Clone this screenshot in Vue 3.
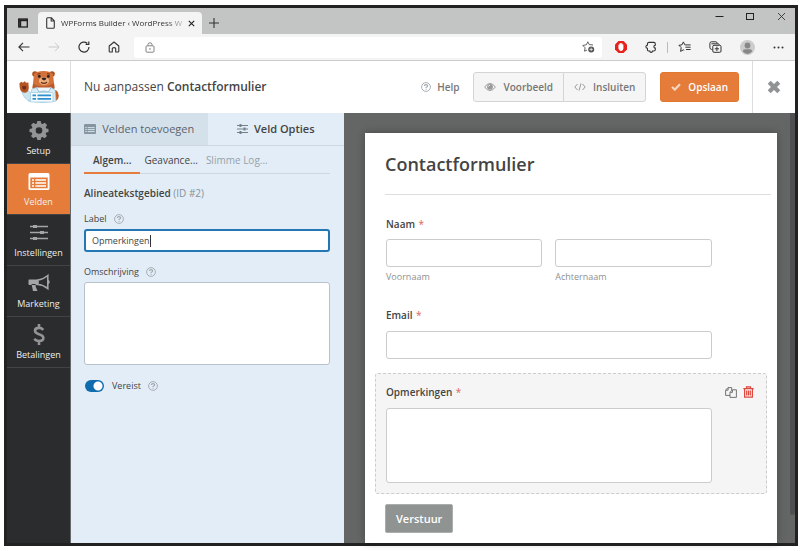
<template>
  <div class="screen">
    <div class="window">
      <header class="titlebar">
        <button class="icon-btn tab-actions" aria-label="Tabbladacties">
          <svg width="10" height="10" viewBox="0 0 10 10">
            <rect x="0.7" y="1" width="8.6" height="8" fill="none" stroke="#222" stroke-width="1.3" />
            <path d="M0.7 2.2H9.3M2.2 2V9" stroke="#222" stroke-width="2" />
          </svg>
        </button>
        <div class="tab">
          <svg width="9" height="12" viewBox="0 0 9 12" fill="none" stroke="#333" stroke-width="1.1" stroke-linejoin="round">
            <path d="M1.5 0.7H5.3L8.3 3.8V10.3Q8.3 11.3 7.3 11.3H1.7Q0.7 11.3 0.7 10.3V1.7Q0.7 0.7 1.5 0.7ZM5.2 0.8V4H8.2" />
          </svg>
          <span class="tab-title">WPForms Builder ‹ WordPress W</span>
          <button class="icon-btn" aria-label="Tabblad sluiten">
            <svg width="7" height="7" viewBox="0 0 7 7" stroke="#222" stroke-width="1.1"><path d="M0.8 0.8L6.2 6.2M6.2 0.8L0.8 6.2" /></svg>
          </button>
        </div>
        <button class="icon-btn new-tab" aria-label="Nieuw tabblad">
          <svg width="10" height="10" viewBox="0 0 10 10" stroke="#333" stroke-width="1.1"><path d="M5 0V10M0 5H10" /></svg>
        </button>
        <div class="window-controls">
          <button class="icon-btn" aria-label="Minimaliseren">
            <svg width="9" height="9" viewBox="0 0 9 9" stroke="#222"><path d="M0.5 4.5H8.5" /></svg>
          </button>
          <button class="icon-btn" aria-label="Maximaliseren">
            <svg width="9" height="9" viewBox="0 0 9 9" fill="none" stroke="#222"><rect x="0.5" y="1.5" width="7" height="6" /></svg>
          </button>
          <button class="icon-btn" aria-label="Sluiten">
            <svg width="9" height="9" viewBox="0 0 9 9" stroke="#333" stroke-width="0.9"><path d="M1 1L8 8M8 1L1 8" /></svg>
          </button>
        </div>
      </header>

      <nav class="toolbar" aria-label="Browser">
        <div class="nav-buttons">
          <button class="icon-btn" aria-label="Vorige">
            <svg width="12" height="10" viewBox="0 0 12 10" fill="none" stroke="#333" stroke-width="1.1"><path d="M11.5 5H1M5 0.8L0.9 5L5 9.2" /></svg>
          </button>
          <button class="icon-btn" aria-label="Volgende" disabled>
            <svg width="12" height="10" viewBox="0 0 12 10" fill="none" stroke="#c9c9c9" stroke-width="1"><path d="M0.5 5H11M7 0.8L11.1 5L7 9.2" /></svg>
          </button>
          <button class="icon-btn" aria-label="Vernieuwen">
            <svg width="12" height="12" viewBox="0 0 12 12" fill="none" stroke="#333" stroke-width="1.2"><path d="M11 6A5 5 0 1 1 9.2 2.2M10.8 0.6V3.4H7.6" /></svg>
          </button>
          <button class="icon-btn" aria-label="Startpagina">
            <svg width="12" height="12" viewBox="0 0 12 12" fill="none" stroke="#333" stroke-width="1.1" stroke-linejoin="round"><path d="M1.2 5L6 1L10.8 5V10.2Q10.8 11 10 11H7.7V7.6Q7.7 6.6 6 6.6Q4.3 6.6 4.3 7.6V11H2Q1.2 11 1.2 10.2Z" /></svg>
          </button>
        </div>
        <div class="address">
          <svg width="10" height="11" viewBox="0 0 10 11" fill="none" stroke="#777" stroke-width="0.9">
            <rect x="1" y="3.8" width="8" height="6.4" rx="1" /><path d="M3 3.6V2.4Q3 0.8 5 0.8Q7 0.8 7 2.4V3.6" /><circle cx="5" cy="7" r="0.7" fill="#555" stroke="none" />
          </svg>
          <input type="text" aria-label="Adresbalk" />
          <button class="icon-btn" aria-label="Toevoegen aan favorieten">
            <svg width="13" height="12" viewBox="0 0 13 12" fill="none" stroke="#555" stroke-width="0.9" stroke-linejoin="round">
              <path d="M10 4.4L10.6 3.9L7.2 3.6L5.8 0.8L4.3 3.8L0.8 4.4L3.1 6.8L2.5 10.2L5 9" /><circle cx="9.2" cy="8.4" r="3" fill="#555" stroke="none" /><path d="M9.2 6.7V10.1M7.5 8.4H10.9" stroke="#eee" stroke-width="0.8" />
            </svg>
          </button>
        </div>
        <div class="browser-actions">
          <button class="icon-btn" aria-label="Adblocker">
            <svg width="12" height="12" viewBox="0 0 12 12"><path d="M3.5 0H8.5L12 3.5V8.5L8.5 12H3.5L0 8.5V3.5Z" fill="#e8211d" /><path d="M3.4 5.6V3.7H4.4V2.6H5.4V2H6.4V2.6H7.4V3.4H8.4V7.8Q7.8 10 6 10Q4.6 10 3.4 7.4Z" fill="#fff" /></svg>
          </button>
          <button class="icon-btn" aria-label="Extensies">
            <svg width="12" height="12" viewBox="0 0 12 12" fill="none" stroke="#333" stroke-width="1.1"><path d="M4 1.4H8.8Q10.3 1.4 10.3 3V4.2C8.4 4 8.4 7.2 10.3 7V8.6Q10.3 10 8.8 10H7.5C7.4 11.8 4.8 11.8 4.8 10H3.6Q2.4 9.8 2.4 8.5V7.3C0.4 7 0.4 4.4 2.4 4.2V3Q2.4 1.4 4 1.4Z" /></svg>
          </button>
          <span class="divider"></span>
          <button class="icon-btn" aria-label="Favorieten">
            <svg width="13" height="12" viewBox="0 0 13 12" fill="none" stroke="#333" stroke-width="1" stroke-linejoin="round"><path d="M7.5 4L6.8 3.8L5.4 0.9L4 3.8L0.9 4.3L3.2 6.6L2.6 10.4L5.4 8.8L6.2 9.3M7.4 3.9H12.6M7.4 6.2H12.6M8 8.5H12.6" /></svg>
          </button>
          <button class="icon-btn" aria-label="Verzamelingen">
            <svg width="13" height="12" viewBox="0 0 13 12" fill="none" stroke="#333" stroke-width="1"><path d="M3.3 8.4H2.4Q0.9 8 0.9 6.6V2.4Q0.9 0.8 2.4 0.8H6.8Q8.1 0.8 8.3 2.4M2.4 2.8H9.2Q10.2 2.8 10.3 3.8" /><rect x="3.8" y="4.3" width="8.2" height="7" rx="1.2" /><path d="M7.9 5.7V10M5.8 7.8H10" /></svg>
          </button>
          <button class="icon-btn" aria-label="Profiel">
            <svg width="15" height="15" viewBox="0 0 15 15"><circle cx="7.5" cy="7.5" r="7.5" fill="#ccc" /><circle cx="7.5" cy="5.5" r="2.9" fill="#888" /><path d="M2.8 11.6Q3 9.3 5 9.3H10Q12 9.3 12.2 11.6Q7.5 16.5 2.8 11.6Z" fill="#888" /></svg>
          </button>
          <button class="icon-btn" aria-label="Meer">
            <svg width="11" height="3" viewBox="0 0 11 3" fill="#333"><circle cx="1.5" cy="1.5" r="1" /><circle cx="5.5" cy="1.5" r="1" /><circle cx="9.5" cy="1.5" r="1" /></svg>
          </button>
        </div>
      </nav>

      <div class="builder-header">
        <div class="logo">
          <svg width="40" height="34" viewBox="0 0 40 34">
            <circle cx="16" cy="4" r="2.8" fill="#a9501f" /><circle cx="33" cy="4" r="2.8" fill="#a9501f" />
            <path d="M33 21Q36 19 38 21Q41 25 39 29Q37 32 33 31Z" fill="#c4602a" />
            <path d="M15 4Q18 1 24.5 1Q31 1 34 4L35.5 18Q33 21 25 21Q16 21 13.5 18Z" fill="#d2713a" />
            <path d="M14 14Q18 16 24 16.5Q31 16 35 13L35.5 18.5L30 20H18L13.5 18.5Z" fill="#ba5a2a" />
            <ellipse cx="25" cy="11" rx="5.2" ry="4" fill="#eeb07c" />
            <path d="M22.5 8Q25 6.8 27.5 8Q27 10.4 25 10.4Q23 10.4 22.5 8Z" fill="#33241f" />
            <path d="M22 12.2Q25 14.6 28 12" stroke="#662b18" stroke-width="1.3" fill="none" />
            <path d="M18.4 4.2L21.4 3.6M28 3.6L31 4.2" stroke="#6e3018" stroke-width="1" />
            <circle cx="20.3" cy="6.4" r="1.4" fill="#2d211d" /><circle cx="29.3" cy="6.4" r="1.4" fill="#2d211d" />
            <path d="M13 19L17.5 17.6L24.5 21L32 17.6L36 20L37 31Q24 34 9 31Z" fill="#d7ecf6" stroke="#9cc7dc" stroke-width="0.7" />
            <path d="M17.5 17.6L20 22L24.5 21L29.5 22L32 17.6" fill="#eef8fc" stroke="#7fb3ce" stroke-width="0.8" />
            <path d="M3 22L9 20.5L14 25L13 31.5Q5 30 3 22Z" fill="#cce5f1" stroke="#9cc7dc" stroke-width="0.7" />
            <path d="M0.4 13.5L2.2 11.8L4 12.8L5.6 11.2L7.2 12.8L9.4 12.4L9.8 18Q9.4 22.5 5.6 22.8Q1.6 22.4 0.8 18Z" fill="#b65524" />
            <path d="M3 16.6Q5.2 14.8 7.4 16.8Q7.2 20 5 19.8Q3.2 19 3 16.6Z" fill="#6e3018" />
            <rect x="11.5" y="22.5" width="22.5" height="9.5" rx="1" fill="#f5fbfe" stroke="#9ecae0" stroke-width="0.7" />
            <path d="M13.5 25.4H17M18.5 25.4H32M13.5 28.9H17M18.5 28.9H32" stroke="#2e8fd0" stroke-width="1.8" />
          </svg>
        </div>
        <h1 class="form-name">Nu aanpassen <strong>Contactformulier</strong></h1>
        <div class="header-actions">
          <a href="#" class="help"><HelpIcon class="help-icon" />Help</a>
          <div class="button-group">
            <button type="button">
              <svg width="12" height="8" viewBox="0 0 12 8"><path d="M0.6 4Q6 -3 11.4 4Q6 11 0.6 4Z" fill="none" stroke="#999" /><circle cx="6" cy="3.8" r="2.9" fill="#999" /><path d="M4.5 3.6Q4.5 2.3 6 2.2" stroke="#fff" stroke-width="0.7" fill="none" /></svg>
              Voorbeeld
            </button>
            <button type="button">
              <svg width="12" height="8" viewBox="0 0 12 8" fill="none" stroke="#999" stroke-width="1"><path d="M3.5 1L0.8 4L3.5 7M8.5 1L11.2 4L8.5 7M7 0.4L5 7.6" /></svg>
              Insluiten
            </button>
          </div>
          <button type="button" class="save">
            <svg width="10" height="8" viewBox="0 0 10 8"><path d="M1 4L3.8 6.6L9 1.2" fill="none" stroke="#f9d5bd" stroke-width="2.2" /></svg>
            Opslaan
          </button>
          <button type="button" class="icon-btn exit" aria-label="Bouwer sluiten">
            <svg width="14" height="14" viewBox="0 0 14 14"><path d="M2.2 2.2L11.8 11.8M11.8 2.2L2.2 11.8" stroke="#909393" stroke-width="4.2" /></svg>
          </button>
        </div>
      </div>

      <div class="builder">
        <nav class="sidebar" aria-label="Formulierbouwer">
          <a v-for="item in menu" :key="item.name" href="#" :class="{ active: item.name === activeMenu }" @click.prevent="activeMenu = item.name">
            <svg width="22" height="22" viewBox="0 0 22 22">
              <path v-for="(p, i) in item.paths" :key="i" :d="p.d" :fill="p.fill || 'none'" :stroke="p.stroke || 'none'" :stroke-width="p.width || 1" fill-rule="evenodd" />
            </svg>
            {{ item.name }}
          </a>
        </nav>

        <section class="panel">
          <div class="panel-tabs">
            <button type="button">
              <svg width="12" height="10" viewBox="0 0 12 10"><rect width="12" height="10" rx="1" fill="#8495a0" /><path d="M1.3 3.6H2.7M3.7 3.6H10.7M1.3 5.6H2.7M3.7 5.6H10.7M1.3 7.6H2.7M3.7 7.6H10.7" stroke="#d6e2ea" /></svg>
              Velden toevoegen
            </button>
            <button type="button" class="active">
              <svg width="11" height="10" viewBox="0 0 11 10" stroke="#74818a"><path d="M0 1.5H11M0 5H11M0 8.5H11" /><path d="M3.5 0V3M7.5 3.5V6.5M3.5 7V10" stroke-width="2" /></svg>
              Veld Opties
            </button>
          </div>
          <div class="panel-body">
            <div class="option-tabs">
              <button type="button" class="active">Algem...</button>
              <button type="button">Geavance...</button>
              <button type="button" class="muted">Slimme Log...</button>
            </div>
            <h2 class="field-name">Alineatekstgebied <span>(ID #2)</span></h2>
            <label class="option-label" for="option-label">Label <HelpIcon class="help-icon" /></label>
            <div class="option-control">
              <input id="option-label" ref="labelInput" v-model="label" type="text" class="option-input" />
              <span class="caret" :style="{ left: caretLeft + 'px' }"></span>
            </div>
            <label class="option-label" for="option-description">Omschrijving <HelpIcon class="help-icon" /></label>
            <textarea id="option-description" v-model="description" class="option-textarea"></textarea>
            <label class="option-toggle">
              <input v-model="required" type="checkbox" />
              <span>Vereist</span>
              <HelpIcon class="help-icon" />
            </label>
          </div>
        </section>

        <main class="canvas">
          <form class="preview" @submit.prevent>
            <h2 class="preview-title">Contactformulier</h2>
            <fieldset class="field">
              <legend>Naam <i>*</i></legend>
              <div class="field-row">
                <div>
                  <input id="first-name" type="text" />
                  <label for="first-name">Voornaam</label>
                </div>
                <div>
                  <input id="last-name" type="text" />
                  <label for="last-name">Achternaam</label>
                </div>
              </div>
            </fieldset>
            <div class="field email">
              <label class="field-label" for="email">Email <i>*</i></label>
              <input id="email" type="email" />
            </div>
            <div class="field selected">
              <div class="field-head">
                <label class="field-label" for="comments">{{ label }} <i v-if="required">*</i></label>
                <button type="button" class="icon-btn" aria-label="Dupliceren">
                  <svg width="12" height="11" viewBox="0 0 12 11" fill="none" stroke="#666" stroke-width="0.9" stroke-linejoin="round"><path d="M5 8.4H0.6V3.2L3 0.6H6.7V3M3.1 0.8V3.2H0.8" /><path d="M5 5.4L7.4 2.8H11.4V10.4H5ZM7.4 3V5.4H5.2" /></svg>
                </button>
                <button type="button" class="icon-btn" aria-label="Verwijderen">
                  <svg width="11" height="12" viewBox="0 0 11 12" fill="none" stroke="#e0473f" stroke-width="1.2"><path d="M0.3 2.6H10.7M3.5 2.4V0.8H7.5V2.4M1.6 2.8V11.2H9.4V2.8M3.7 4.6V9.4M5.5 4.6V9.4M7.3 4.6V9.4" /></svg>
                </button>
              </div>
              <textarea id="comments"></textarea>
            </div>
            <button type="submit" class="submit">Verstuur</button>
          </form>
          <div class="scrollbar"></div>
        </main>
      </div>
    </div>
  </div>
</template>

<script setup>
import { h, onMounted, ref, watch } from "vue";

// small circled question mark, used next to option labels
const HelpIcon = () =>
  h("svg", { width: 10, height: 10, viewBox: "0 0 10 10", fill: "none", stroke: "currentColor" }, [
    h("circle", { cx: 5, cy: 5, r: 4.4, "stroke-width": 0.9 }),
    h("path", { d: "M3.4 4Q3.4 2.6 5 2.6Q6.6 2.6 6.6 3.9Q6.6 4.6 5.1 5.3V6.1M5.1 6.8V7.8", "stroke-width": 1.1 }),
  ]);

const activeMenu = ref("Velden");
const label = ref("Opmerkingen");
const description = ref("");
const required = ref(true);
const labelInput = ref(null);
const caretLeft = ref(8);

const gray = "#a3a5a6";
const menu = [
  {
    name: "Setup",
    paths: [
      { d: "M9.3 2H12.7L13.2 4.5L14.6 5.1L16.7 3.7L19.1 6.1L17.7 8.2L18.3 9.6L20.5 10.1V13L18.2 13.5L17.6 14.9L19 17L16.6 19.3L14.6 17.9L13.2 18.5L12.7 21H9.3L8.8 18.5L7.4 17.9L5.3 19.3L3 17L4.4 14.9L3.8 13.5L1.5 13V10.1L3.8 9.6L4.4 8.2L3 6.1L5.4 3.7L7.4 5.1L8.8 4.5ZM11 8.2A3.3 3.3 0 1 0 11 14.8A3.3 3.3 0 1 0 11 8.2Z", fill: "#929495" },
    ],
  },
  {
    name: "Velden",
    paths: [
      { d: "M2 3H20Q21.5 3 21.5 4.5V18.5Q21.5 20 20 20H2Q0.5 20 0.5 18.5V4.5Q0.5 3 2 3ZM2.3 7.5V18.2H19.7V7.5Z", fill: "#fff" },
      { d: "M4 10H6M7.3 10H18M4 13H6M7.3 13H18M4 16H6M7.3 16H18", stroke: "#fff", width: 1.6 },
    ],
  },
  {
    name: "Instellingen",
    paths: [
      { d: "M2 5.5H20M2 11.5H20M2 17.5H20", stroke: gray, width: 1.3 },
      { d: "M7 4V7M14 10V13M7 16V19", stroke: gray, width: 4 },
    ],
  },
  {
    name: "Marketing",
    paths: [
      { d: "M1 7.5H10V13H1.5Q0.5 13 0.5 12V8.5Q0.5 7.5 1 7.5ZM3.5 12H7.5L7.8 15L9.5 19H5Z", fill: gray },
      { d: "M10 8Q15 7.5 19.8 3.5V16.5Q15 12.7 10 12.5Z", stroke: gray, width: 1.6 },
      { d: "M19 8H20.5Q21.7 8.5 21.7 10Q21.7 11.5 20.5 12H19Z", fill: gray },
    ],
  },
  {
    name: "Betalingen",
    paths: [
      { d: "M15.3 6.8Q13.5 4.9 11 4.9Q7 4.9 7 7.7Q7 9.9 11 11.2Q15.4 12.5 15.4 15.1Q15.4 18 11 18Q8.2 18 6.2 15.9M11 1V5M11 18V22", stroke: "#929495", width: 2.6 },
    ],
  },
];

// keep the caret right behind the typed text
const placeCaret = () => {
  const ctx = document.createElement("canvas").getContext("2d");
  const style = getComputedStyle(labelInput.value);
  ctx.font = `${style.fontSize} ${style.fontFamily}`;
  caretLeft.value = 8 + Math.round(ctx.measureText(label.value).width);
};

watch(label, placeCaret);

onMounted(() => {
  labelInput.value.focus();
  placeCaret();
});
</script>

<style>
body {
  margin: 0;
  background: #fff;
}
</style>

<style scoped>
* {
  box-sizing: border-box;
}
.screen {
  display: flex;
  min-height: 100vh;
  padding: 5px 2px 5px 4px;
  font-family: "Open Sans", "Noto Sans", sans-serif;
  font-size: 10px;
  line-height: 14px;
  color: #444;
}
.window {
  flex: 1;
  display: flex;
  flex-direction: column;
  border: 3px solid #222;
  min-width: 0;
}
button,
input,
textarea {
  font: inherit;
  color: inherit;
}
button {
  cursor: pointer;
}
svg {
  flex: none;
  display: block;
}
.icon-btn {
  display: flex;
  align-items: center;
  justify-content: center;
  padding: 0;
  border: 0;
  background: none;
}

/* browser */
.titlebar {
  display: flex;
  align-items: flex-end;
  height: 26px;
  background: #c3c4c4;
}
.tab-actions {
  width: 31px;
  height: 22px;
}
.tab {
  display: flex;
  align-items: center;
  gap: 6px;
  width: 164px;
  height: 22px;
  padding: 0 8px;
  border-radius: 4px 4px 0 0;
  background: #f4f4f4;
}
.tab-title {
  flex: 1;
  white-space: nowrap;
  font-size: 8px;
  color: #333;
  mask-image: linear-gradient(to right, #000 85%, rgba(0, 0, 0, 0.3));
}
.new-tab {
  width: 24px;
  height: 22px;
}
.window-controls {
  display: flex;
  align-self: flex-start;
  gap: 22px;
  margin-left: auto;
  padding: 4px 9px 0 0;
}
.toolbar {
  display: flex;
  align-items: center;
  height: 27px;
  padding: 0 11px;
  background: #f4f4f4;
  border-bottom: 1px solid #ccc;
}
.nav-buttons {
  display: flex;
  gap: 18px;
  margin-right: 14px;
}
.address {
  flex: 1;
  display: flex;
  align-items: center;
  height: 21px;
  padding: 0 7px 0 11px;
  border-radius: 3px;
  background: #fff;
}
.address input {
  flex: 1;
  min-width: 0;
  border: 0;
  outline: 0;
  background: none;
}
.browser-actions {
  display: flex;
  align-items: center;
  gap: 18px;
  margin-left: 13px;
}
.divider {
  width: 1px;
  height: 11px;
  margin: 0 -8px;
  background: #bbb;
}

/* builder header */
.builder-header {
  display: flex;
  height: 52px;
  background: #fff;
}
.logo {
  display: flex;
  align-items: center;
  justify-content: center;
  width: 64px;
  border-right: 1px solid #ddd;
}
.form-name {
  align-self: center;
  margin: 0 0 0 13px;
  font-size: 12px;
  font-weight: 400;
}
.form-name strong {
  font-weight: 600;
}
.header-actions {
  display: flex;
  align-items: center;
  margin-left: auto;
  font-size: 10px;
  font-weight: 600;
  color: #777;
}
.help {
  display: flex;
  align-items: center;
  gap: 6px;
  margin-right: 14px;
  color: inherit;
  text-decoration: none;
}
.help-icon {
  color: #a0a8ad;
}
.button-group {
  display: flex;
  margin-right: 14px;
}
.button-group button,
.save {
  display: flex;
  align-items: center;
  gap: 7px;
  height: 30px;
  padding: 0 10px;
  border: 1px solid #d3d4d4;
  background: #f5f5f5;
}
.button-group button:first-child {
  border-radius: 3px 0 0 3px;
}
.button-group button:last-child {
  margin-left: -1px;
  border-radius: 0 3px 3px 0;
}
.save {
  border-color: #e27730;
  border-radius: 3px;
  background: #e57c3a;
  color: #fff;
}
.exit {
  align-self: stretch;
  width: 43px;
  margin-left: 13px;
  border-left: 1px solid #ddd;
}

.builder {
  flex: 1;
  display: flex;
}

/* sidebar */
.sidebar {
  width: 64px;
  background: #2a2c2d;
  border-right: 1px solid #66696b;
}
.sidebar a {
  display: flex;
  flex-direction: column;
  align-items: center;
  gap: 3px;
  height: 51px;
  padding-top: 6px;
  border-bottom: 1px solid #414344;
  font-size: 9px;
  color: #eee;
  text-decoration: none;
}
.sidebar a.active {
  background: #e57c3a;
}

/* options panel */
.panel {
  width: 273px;
  background: #e2edf7;
}
.panel-tabs {
  display: flex;
}
.panel-tabs button {
  flex: 1;
  display: flex;
  align-items: center;
  justify-content: center;
  gap: 6px;
  height: 33px;
  padding: 0;
  border: 0;
  border-bottom: 1px solid #ccd7df;
  background: #d5e1ea;
  font-size: 11px;
  color: #5c646a;
}
.panel-tabs button.active {
  background: #e2edf7;
  font-weight: 600;
  color: #444;
}
.panel-body {
  padding: 0 14px 0 13px;
}
.option-tabs {
  display: flex;
  border-bottom: 1px solid #ccd7df;
}
.option-tabs button {
  height: 28px;
  margin-right: 4px;
  padding: 2px 0 0;
  border: 0;
  border-bottom: 2px solid transparent;
  margin-bottom: -1px;
  background: none;
}
.option-tabs button.active {
  padding: 2px 9px 0;
  border-color: #e57c3a;
  font-weight: 600;
}
.option-tabs .muted {
  margin-left: 4px;
  color: #97a1a9;
}
.field-name {
  margin: 12px 0;
  font-size: 10px;
  line-height: 14px;
  font-weight: 600;
}
.field-name span {
  font-weight: 400;
  color: #86919a;
}
.option-label {
  display: flex;
  align-items: center;
  gap: 7px;
  margin-bottom: 3px;
  font-size: 9px;
}
.option-input,
.option-textarea {
  display: block;
  width: 100%;
  border: 1px solid #b8c2ca;
  border-radius: 3px;
  background: #fff;
  outline: 0;
  font-size: 9px;
}
.option-control {
  position: relative;
  margin-bottom: 13px;
}
.option-input {
  height: 23px;
  padding: 0 7px;
  caret-color: transparent;
}
.option-input:focus {
  border: 2px solid #2377b2;
  padding: 0 6px;
}
.caret {
  display: none;
  position: absolute;
  top: 6px;
  width: 1px;
  height: 12px;
  background: #333;
}
.option-input:focus + .caret {
  display: block;
}
.option-textarea {
  height: 83px;
  padding: 6px 7px;
  resize: none;
}
.option-toggle {
  display: flex;
  align-items: center;
  gap: 7px;
  margin-top: 14px;
  font-size: 9px;
}
.option-toggle input {
  appearance: none;
  width: 19px;
  height: 12px;
  margin: 0 1px 0 1px;
  border-radius: 6px;
  background: radial-gradient(circle at 13px 6px, #fff 4px, #0f6cae 5px);
}
.option-toggle input:not(:checked) {
  background: radial-gradient(circle at 6px 6px, #fff 4px, #9aa5ad 5px);
}

/* form preview */
.canvas {
  flex: 1;
  display: flex;
  padding-left: 21px;
  background: #646666;
}
.preview {
  flex: 1;
  margin: 20px 13px 0 0;
  padding: 20px 10px 10px;
  background: #fff;
  box-shadow: 0 0 8px rgba(0, 0, 0, 0.3);
}
.scrollbar {
  width: 5px;
  height: 402px;
  border-radius: 0 0 3px 3px;
  background: #4e5051;
}
.preview-title {
  margin: 0 -4px 20px 10px;
  padding-bottom: 18px;
  border-bottom: 1px solid #ddd;
  font-size: 18px;
  line-height: 23px;
  font-weight: 600;
}
.field {
  margin: 0;
  padding: 0 10px;
  border: 1px solid transparent;
}
.field legend,
.field-label {
  display: block;
  padding: 0;
  font-size: 10px;
  line-height: 18px;
  font-weight: 600;
}
.field i {
  margin-left: 1px;
  font-style: normal;
  font-weight: 400;
  color: #e0615a;
}
.field input,
.field textarea {
  display: block;
  width: 88%;
  height: 28px;
  margin-top: 7px;
  border: 1px solid #ccc;
  border-radius: 3px;
  background: #fff;
}
.field-row {
  display: flex;
  gap: 13px;
  width: 88%;
}
.field-row > div {
  flex: 1;
}
.field .field-row input {
  width: 100%;
  margin-top: 6px;
}
.field-row label {
  display: block;
  margin-top: 3px;
  font-size: 9px;
  color: #909090;
}
.email {
  margin: 20px 0 13px;
}
.selected {
  padding: 9px 10px 10px;
  border: 1px dashed #ccc;
  border-radius: 3px;
  background: #f5f5f5;
}
.field-head {
  display: flex;
  align-items: center;
  gap: 6px;
}
.field-head .field-label {
  flex: 1;
}
.field-head .icon-btn:last-child {
  margin-right: 2px;
}
.field textarea {
  height: 75px;
  resize: none;
}
.submit {
  height: 29px;
  margin: 10px 0 0 10px;
  padding: 0 10px;
  border: 1px solid #aaadad;
  border-radius: 2px;
  background: #8f9492;
  font-size: 11px;
  font-weight: 600;
  color: #fff;
}
</style>
